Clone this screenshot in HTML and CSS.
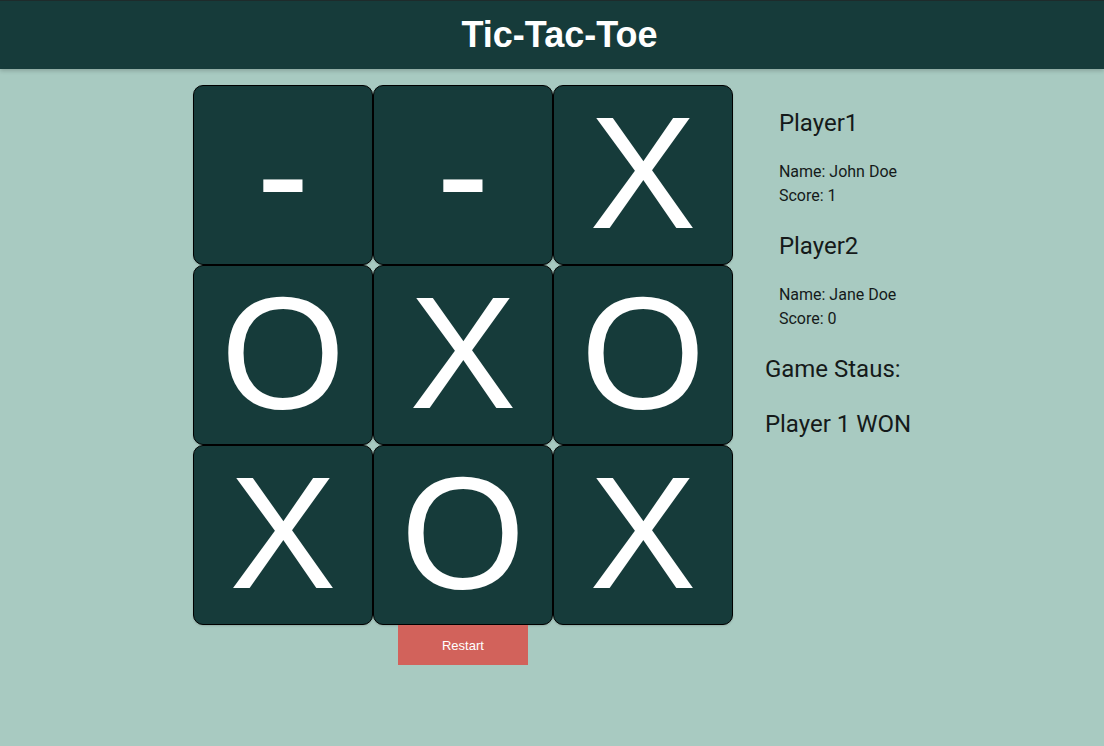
FILE: index.html
```html
<!DOCTYPE html>
<html>
<head>
<meta charset="utf-8">
<title>Tic-Tac-Toe</title>
<link rel="stylesheet" href="styles.css">
</head>
<body>
<header class="topbar">
  <h1 class="title">Tic-Tac-Toe</h1>
</header>
<main class="layout">
  <section class="game">
    <div class="board">
      <div class="cell">-</div>
      <div class="cell">-</div>
      <div class="cell">X</div>
      <div class="cell">O</div>
      <div class="cell">X</div>
      <div class="cell">O</div>
      <div class="cell">X</div>
      <div class="cell">O</div>
      <div class="cell">X</div>
    </div>
    <button class="restart">Restart</button>
  </section>
  <aside class="panel">
    <div class="player">
      <h3 class="player-title">Player1</h3>
      <p class="info">Name: John Doe</p>
      <p class="info">Score: 1</p>
    </div>
    <div class="player">
      <h3 class="player-title">Player2</h3>
      <p class="info">Name: Jane Doe</p>
      <p class="info">Score: 0</p>
    </div>
    <h3 class="status-title">Game Staus:</h3>
    <h3 class="status-value">Player 1 WON</h3>
  </aside>
</main>
</body>
</html>
```
FILE: styles.css
```css
html, body {
  margin: 0;
  padding: 0;
}
body {
  background: #a8cac1;
  font-family: Roboto, "Noto Sans", sans-serif;
  color: #151a1a;
  min-height: 746px;
}
.topbar {
  height: 68px;
  border-top: 1px solid #1e2b2b;
  background: #163b3a;
  box-shadow: 0 2px 4px rgba(0, 0, 0, 0.18);
  display: flex;
  align-items: center;
  justify-content: center;
  padding-left: 15px;
}
.title {
  margin: 0;
  font-family: "Liberation Sans", Arial, sans-serif;
  font-weight: 700;
  font-size: 36px;
  line-height: 40px;
  color: #ffffff;
}
.layout {
  display: flex;
  justify-content: center;
  align-items: flex-start;
  gap: 32px;
  padding-top: 16px;
}
.game {
  display: flex;
  flex-direction: column;
  align-items: center;
}
.board {
  display: grid;
  grid-template-columns: repeat(3, 180px);
  grid-auto-rows: 180px;
}
.cell {
  box-sizing: border-box;
  border: 1px solid #000;
  border-radius: 10px;
  background: #163b3a;
  color: #ffffff;
  font-family: "Liberation Sans", Arial, sans-serif;
  font-size: 160px;
  line-height: 174px;
  text-align: center;
  box-shadow: 0 1px 2px rgba(0, 0, 0, 0.15);
}
.restart {
  width: 130px;
  height: 40px;
  border: none;
  margin: 0;
  background: #d2625b;
  color: #ffffff;
  font-family: "Liberation Sans", Arial, sans-serif;
  font-size: 13px;
  cursor: pointer;
}
.panel {
  padding-top: 24px;
}
.player {
  padding-left: 14px;
  margin-bottom: 24px;
}
.player-title {
  margin: 0 0 23px;
  font-size: 24px;
  line-height: 28px;
  font-weight: 400;
}
.info {
  margin: 0;
  font-size: 16px;
  line-height: 24px;
}
.status-title {
  margin: 0;
  font-size: 24px;
  line-height: 28px;
  font-weight: 400;
}
.status-value {
  margin: 27px 0 0;
  font-size: 24px;
  line-height: 28px;
  font-weight: 400;
}
```
